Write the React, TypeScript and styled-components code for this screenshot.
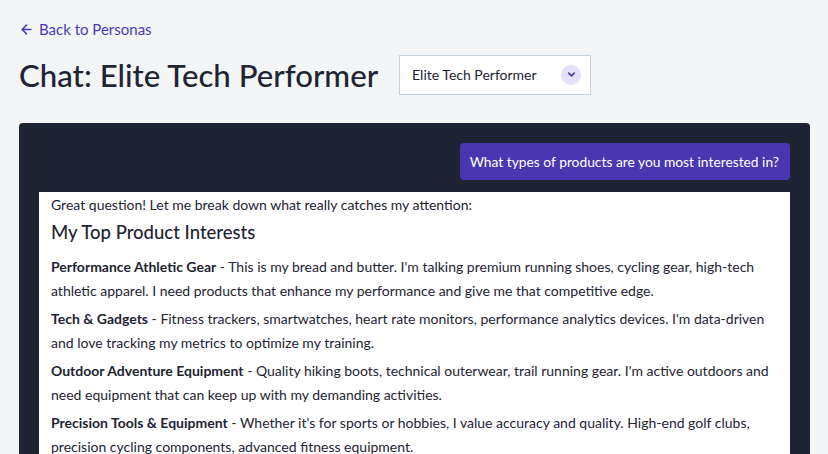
import styled, { createGlobalStyle } from "styled-components";

const GlobalStyle = createGlobalStyle`
  body {
    margin: 0;
    background: #f4f5f7;
    font-family: Lato, "Liberation Sans", sans-serif;
    color: #1e2433;
  }
`;

const Page = styled.div`
  padding: 19px 18px 0 19px;
  height: 454px;
  box-sizing: border-box;
  overflow: hidden;
`;

const BackLink = styled.a`
  display: inline-flex;
  align-items: center;
  gap: 5px;
  color: #4b3ab5;
  font-size: 15px;
  text-decoration: none;
  height: 20px;
`;

const Header = styled.div`
  display: flex;
  align-items: center;
  gap: 21px;
  margin-top: 15px;
`;

const Title = styled.h1`
  margin: 0;
  font-size: 31.2px;
  font-weight: 500;
  line-height: 40px;
  color: #1e2433;
`;

const Select = styled.div`
  width: 192px;
  height: 40px;
  box-sizing: border-box;
  border: 1px solid #c6d1de;
  background: #fff;
  display: flex;
  align-items: center;
  justify-content: space-between;
  padding: 0 9px 0 12px;
  font-size: 14px;
  color: #1e2433;
`;

const ChevronCircle = styled.span`
  width: 20px;
  height: 20px;
  border-radius: 50%;
  background: #e5e1fa;
  display: flex;
  align-items: center;
  justify-content: center;
`;

const ChatPanel = styled.div`
  margin-top: 28px;
  background: #1e2433;
  border-radius: 4px 4px 0 0;
  padding: 20px 20px 0;
  height: 400px;
  display: flex;
  flex-direction: column;
  gap: 12px;
`;

const UserBubble = styled.div`
  align-self: flex-end;
  background: #4a36b1;
  color: #fff;
  border-radius: 4px;
  padding: 0 11px 0 10px;
  height: 37px;
  display: flex;
  align-items: center;
  font-size: 13.8px;
`;

const AssistantBlock = styled.div`
  background: #fff;
  padding: 3px 12px 0;
  font-size: 14px;
  color: #1e2433;
  line-height: 24px;
  flex: 1;
`;

const Intro = styled.div`
  line-height: 20px;
`;

const Heading = styled.h2`
  margin: 5px 0 11px;
  font-size: 18.5px;
  font-weight: 500;
  line-height: 24px;
`;

const Para = styled.p`
  margin: 0 0 4px;
`;

const interests = [
  {
    name: "Performance Athletic Gear",
    text: "This is my bread and butter. I'm talking premium running shoes, cycling gear, high-tech athletic apparel. I need products that enhance my performance and give me that competitive edge.",
  },
  {
    name: "Tech & Gadgets",
    text: "Fitness trackers, smartwatches, heart rate monitors, performance analytics devices. I'm data-driven and love tracking my metrics to optimize my training.",
  },
  {
    name: "Outdoor Adventure Equipment",
    text: "Quality hiking boots, technical outerwear, trail running gear. I'm active outdoors and need equipment that can keep up with my demanding activities.",
  },
  {
    name: "Precision Tools & Equipment",
    text: "Whether it's for sports or hobbies, I value accuracy and quality. High-end golf clubs, precision cycling components, advanced fitness equipment.",
  },
];

const App = () => {
  return (
    <Page>
      <GlobalStyle />
      <BackLink href="#">
        <svg width="15" height="15" viewBox="0 0 24 24" fill="none" stroke="currentColor" strokeWidth="2.4" strokeLinecap="round" strokeLinejoin="round">
          <path d="M19 12H5M12 19l-7-7 7-7" />
        </svg>
        Back to Personas
      </BackLink>
      <Header>
        <Title>Chat: Elite Tech Performer</Title>
        <Select>
          Elite Tech Performer
          <ChevronCircle>
            <svg width="11" height="11" viewBox="0 0 24 24" fill="none" stroke="#4a36b1" strokeWidth="3.5" strokeLinecap="round" strokeLinejoin="round">
              <path d="M6 9l6 6 6-6" />
            </svg>
          </ChevronCircle>
        </Select>
      </Header>
      <ChatPanel>
        <UserBubble>What types of products are you most interested in?</UserBubble>
        <AssistantBlock>
          <Intro>Great question! Let me break down what really catches my attention:</Intro>
          <Heading>My Top Product Interests</Heading>
          {interests.map((item) => (
            <Para key={item.name}>
              <strong>{item.name}</strong> - {item.text}
            </Para>
          ))}
        </AssistantBlock>
      </ChatPanel>
    </Page>
  );
};

export default App;
